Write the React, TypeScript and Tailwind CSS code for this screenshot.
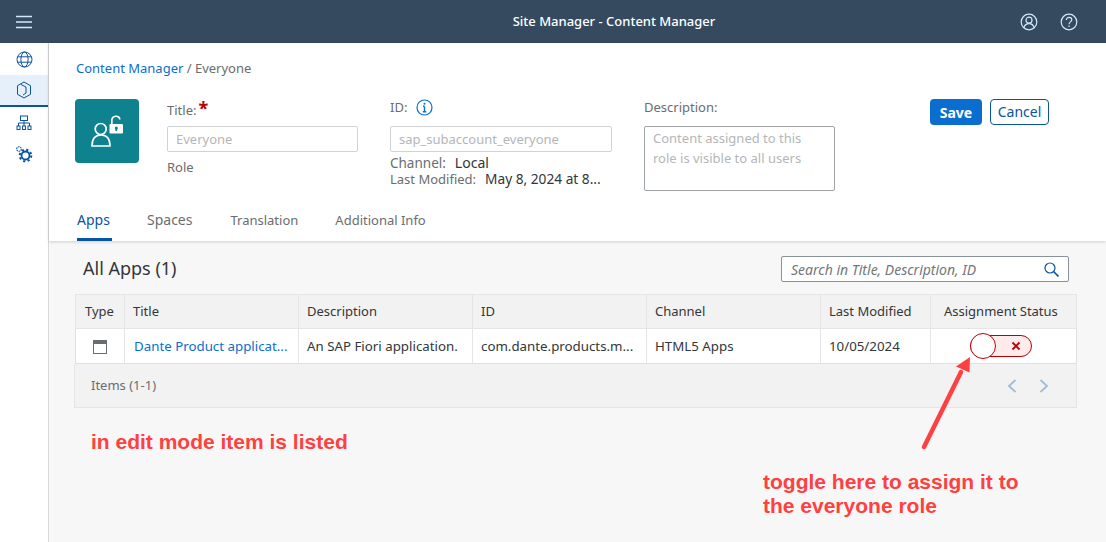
import { JSX } from "react";

const columns = ["Type", "Title", "Description", "ID", "Channel", "Last Modified", "Assignment Status"];

function TopBar(): JSX.Element {
    return <div className="h-[43px] bg-[#354a5f] flex items-center text-white shrink-0">
        <div className="w-[48px] flex justify-center">
            <svg width="18" height="14" viewBox="0 0 18 14" fill="none" stroke="#d1e8ff" strokeWidth="1.6">
                <path d="M1 1.500h16M1 7h16M1 12.500h16" />
            </svg>
        </div>
        <div className="flex-1 text-center text-[13px] font-medium pl-[160px]">Site Manager - Content Manager</div>
        <div className="flex gap-[22px] pr-[28px]">
            <svg width="18" height="18" viewBox="0 0 18 18" fill="none" stroke="#d1e8ff" strokeWidth="1.2">
                <circle cx="9" cy="9" r="7.8" />
                <circle cx="9" cy="7.2" r="3" />
                <path d="M3.9 14.6c.7-2.600 2.700-4 5.100-4s4.400 1.400 5.100 4" />
            </svg>
            <svg width="18" height="18" viewBox="0 0 18 18" fill="none" stroke="#d1e8ff" strokeWidth="1.2">
                <circle cx="9" cy="9" r="7.8" />
                <path d="M6.300 7c0-1.600 1.200-2.600 2.800-2.600S11.800 5.400 11.800 6.800c0 2-2.800 2.200-2.800 4.400" />
                <path d="M9 12.600v1.400" />
            </svg>
        </div>
    </div>
}

function SideBar(): JSX.Element {
    const stroke = "#0854a0";
    return <div className="w-[49px] shrink-0 border-r border-[#d9d9d9] bg-white flex flex-col">
        <div className="h-[32px] flex items-center justify-center">
            <svg width="17" height="17" viewBox="0 0 17 17" fill="none" stroke={stroke} strokeWidth="1">
                <circle cx="8.500" cy="8.500" r="7.500" />
                <ellipse cx="8.500" cy="8.500" rx="3.600" ry="7.500" />
                <path d="M1.500 5.800h14M1.500 11.200h14" />
            </svg>
        </div>
        <div className="h-[32px] flex items-center justify-center bg-[#e5f0fa] border-b-2 border-[#0854a0]">
            <svg width="16" height="18" viewBox="0 0 16 18" fill="none" stroke={stroke} strokeWidth="1">
                <path d="M8 1l6.500 3.700v8.600L8 17l-6.500-3.700V4.700z" />
                <path d="M5 3.500l5 2.500v6l-3 2" />
            </svg>
        </div>
        <div className="h-[32px] flex items-center justify-center">
            <svg width="16" height="16" viewBox="0 0 16 16" fill="none" stroke={stroke} strokeWidth="1">
                <rect x="4.500" y="1" width="7" height="4.500" />
                <path d="M8 5.500V8M2.500 11V8h11v3M8 8v3" />
                <rect x="1" y="11" width="3" height="3.500" />
                <rect x="6.500" y="11" width="3" height="3.500" />
                <rect x="12" y="11" width="3" height="3.500" />
            </svg>
        </div>
        <div className="h-[30px] flex items-center justify-center">
            <svg width="18" height="18" viewBox="0 0 18 18" fill="none" stroke={stroke}>
                <circle cx="4" cy="4" r="2.300" strokeWidth="1.100" strokeDasharray="1.500 0.700" />
                <circle cx="10.500" cy="10.500" r="4" strokeWidth="1.800" />
                <circle cx="10.500" cy="10.500" r="5.800" strokeWidth="2" strokeDasharray="2.200 2.350" />
            </svg>
        </div>
    </div>
}

function ObjectHeader(): JSX.Element {
    return <div className="bg-white h-[198px] shrink-0 shadow-[0_1px_3px_rgba(0,0,0,0.16)] z-10 flex flex-col">
        <div className="pl-[27px] pt-[16px] text-[13px] leading-[18px] text-[#6a6d70]">
            <span className="text-[#0a6ed1]">Content Manager</span> / Everyone
        </div>
        <div className="flex pl-[26px] pt-[22px] h-[127px]">
            <div className="w-[64px] h-[64px] rounded bg-[#0f828f]">
                <svg width="64" height="64" viewBox="0 0 64 64" fill="none" stroke="white" strokeWidth="1.700">
                    <circle cx="25.700" cy="30" r="5.500" />
                    <path d="M17 47c0-7 3-11 9-11s9 4 9 11z" />
                    <path d="M36.800 25v-3.500c0-5.500 8-5.500 8-1" />
                    <rect x="34.500" y="25" width="13.500" height="9.500" rx="1.200" fill="white" stroke="none" />
                    <circle cx="41.300" cy="29" r="1.500" fill="#0f828f" stroke="none" />
                    <path d="M41.300 29v3" stroke="#0f828f" />
                </svg>
            </div>
            <div className="w-[191px] ml-[28px]">
                <div className="h-[16px] leading-[16px] text-[13px] text-[#6a6d70]">Title:<span className="text-[#bb0000] text-[18px] leading-none ml-[2px] font-bold">*</span></div>
                <div className="mt-[11px] h-[26px] border border-[#d0d3d6] rounded-[2px] px-[8px] text-[13px] leading-[24px] text-[#b4b6b8]">Everyone</div>
                <div className="mt-[6px] text-[13px] leading-[18px] text-[#6a6d70]">Role</div>
            </div>
            <div className="w-[222px] ml-[32px]">
                <div className="h-[16px] leading-[16px] text-[13px] text-[#6a6d70] flex items-center gap-[9px]">
                    ID:
                    <svg width="17" height="17" viewBox="0 0 17 17" fill="none" stroke="#0a6ed1">
                        <circle cx="8.500" cy="8.500" r="7.500" strokeWidth="1.200" />
                        <path d="M8.500 7.500v5M6.800 12.800h3.400M7 7.300h1.500" strokeWidth="1.400" />
                        <circle cx="8.500" cy="4.700" r="1" fill="#0a6ed1" stroke="none" />
                    </svg>
                </div>
                <div className="mt-[11px] h-[26px] border border-[#d0d3d6] rounded-[2px] px-[8px] text-[13px] leading-[24px] text-[#b4b6b8]">sap_subaccount_everyone</div>
                <div className="mt-[3px] text-[13.5px] leading-[16px] text-[#6a6d70]">Channel:<span className="ml-[9px] text-[14px] text-[#32363a]">Local</span></div>
                <div className="text-[13px] leading-[16px] text-[#6a6d70] whitespace-nowrap">Last Modified:<span className="ml-[9px] text-[13.7px] text-[#32363a]">May 8, 2024 at 8...</span></div>
            </div>
            <div className="w-[191px] ml-[32px]">
                <div className="h-[16px] leading-[16px] text-[13px] text-[#6a6d70]">Description:</div>
                <div className="mt-[11px] h-[65px] border border-[#a0a3a6] rounded-[2px] px-[8px] py-[1px] text-[13px] leading-[20px] text-[#b4b6b8]">Content assigned to this role is visible to all users</div>
            </div>
            <div className="flex gap-[8px] ml-[95px] h-[26px]">
                <div className="w-[52px] rounded bg-[#0a6ed1] text-white text-[14px] font-bold flex items-center justify-center">Save</div>
                <div className="w-[59px] rounded border border-[#0854a0] text-[#0854a0] text-[14px] pb-[1px] flex items-center justify-center">Cancel</div>
            </div>
        </div>
        <div className="flex pl-[28px] pt-[2px] text-[13px] leading-[20px] text-[#6a6d70] gap-[38px] h-[33px] mt-auto">
            <div className="text-[14px] leading-[20px] text-[#0854a0] border-b-[3px] border-[#0854a0] w-[35px] mr-[-3px]">Apps</div>
            <div className="text-[14px] leading-[20px]">Spaces</div>
            <div>Translation</div>
            <div className="ml-[-1px]">Additional Info</div>
        </div>
    </div>
}

function Toggle(): JSX.Element {
    return <div className="relative w-[62px] h-[22px] rounded-full border border-[#bb0000] bg-[#ffebeb] flex items-center justify-end pr-[10px]">
        <div className="absolute left-[-1px] top-[-3px] w-[26px] h-[26px] rounded-full bg-white border border-[#bb0000]"></div>
        <svg width="10" height="10" viewBox="0 0 10 10" stroke="#bb0000" strokeWidth="1.800"><path d="M1.500 1.500l7 7M8.500 1.500l-7 7" /></svg>
    </div>
}

function AppsTable(): JSX.Element {
    const grid = "grid grid-cols-[49px_174px_174px_174px_174px_110px_145px]";
    const cell = "flex items-center border-r border-[#e5e5e5] px-[8px] pt-[1px] whitespace-nowrap overflow-hidden";
    return <div className="ml-[26px] w-[1002px] mt-[12px] text-[13px]">
        <div className={grid + " h-[35px] bg-[#f2f2f2] border border-[#e5e5e5] text-[#32363a]"}>
            {columns.map((c, idx) => (
                <div key={idx} className={idx === 6 ? "flex items-center pl-[13px] pt-[1px] whitespace-nowrap" : cell + (idx === 0 ? " pl-[9px]" : "")}>{c}</div>
            ))}
        </div>
        <div className={grid + " h-[35px] bg-white border-x border-b border-[#e0e0e0] text-[13.3px] text-[#32363a]"}>
            <div className={cell + " justify-center"}>
                <svg width="14" height="14" viewBox="0 0 14 14" fill="none" stroke="#6a6d70"><rect x="0.500" y="0.500" width="13" height="13" /><rect x="0.500" y="0.500" width="13" height="3" fill="#6a6d70" /></svg>
            </div>
            <div className={cell + " text-[#0a6ed1] pl-[9px]"}>Dante Product applicat...</div>
            <div className={cell}>An SAP Fiori application.</div>
            <div className={cell}>com.dante.products.m...</div>
            <div className={cell}>HTML5 Apps</div>
            <div className={cell}>10/05/2024</div>
            <div className="flex items-center pl-[39px]"><Toggle /></div>
        </div>
        <div className="h-[44px] ml-[-1px] bg-[#f2f2f2] border-x border-b border-[#e5e5e5] flex items-center justify-between pl-[16px] pr-[27px] text-[#6a6d70]">
            <span>Items (1-1)</span>
            <div className="flex gap-[22px]">
                <svg width="10" height="14" viewBox="0 0 10 14" fill="none" stroke="#9fbcd9" strokeWidth="1.800"><path d="M8.500 1L2 7l6.500 6" /></svg>
                <svg width="10" height="14" viewBox="0 0 10 14" fill="none" stroke="#9fbcd9" strokeWidth="1.800"><path d="M1.500 1L8 7l-6.500 6" /></svg>
            </div>
        </div>
    </div>
}

export default function App(): JSX.Element {
    const font = { fontFamily: '"Noto Sans", sans-serif' };
    return <div style={font} className="relative w-[1106px] h-[542px] overflow-hidden flex flex-col bg-[#f7f7f7]">
        <TopBar />
        <div className="flex flex-1 min-h-0">
            <SideBar />
            <div className="flex-1 flex flex-col min-w-0">
                <ObjectHeader />
                <div className="flex items-center justify-between pl-[34px] pr-[37px] pt-[15px]">
                    <div className="text-[18px] leading-[26px] mt-[-2px] text-[#32363a]">All Apps (1)</div>
                    <div className="w-[288px] h-[26px] bg-white border border-[#89919a] rounded-[2px] flex items-center justify-between pl-[9px] pr-[9px]">
                        <span className="text-[14px] italic text-[#74777a]">Search in Title, Description, ID</span>
                        <svg width="15" height="15" viewBox="0 0 15 15" fill="none" stroke="#0854a0" strokeWidth="1.200"><circle cx="6" cy="6" r="5" /><path d="M9.500 9.500l5 5" strokeWidth="1.600" /></svg>
                    </div>
                </div>
                <AppsTable />
            </div>
        </div>
        <div className="absolute left-[91px] top-[430px] text-[21px] leading-[24px] font-bold text-[#ff4040]" style={{ fontFamily: '"Liberation Sans", sans-serif' }}>in edit mode item is listed</div>
        <div className="absolute left-[763px] top-[470px] text-[21px] leading-[24px] font-bold text-[#ff4040]" style={{ fontFamily: '"Liberation Sans", sans-serif' }}>toggle here to assign it to<br />the everyone role</div>
        <svg className="absolute left-[915px] top-[350px]" width="65" height="105" viewBox="915 350 65 105" fill="none">
            <path d="M924 447L961 372" stroke="#ff4040" strokeWidth="4.500" strokeLinecap="round" />
            <path d="M970 357L956 366.500L969.500 372.500z" fill="#ff4040" />
        </svg>
    </div>
}
